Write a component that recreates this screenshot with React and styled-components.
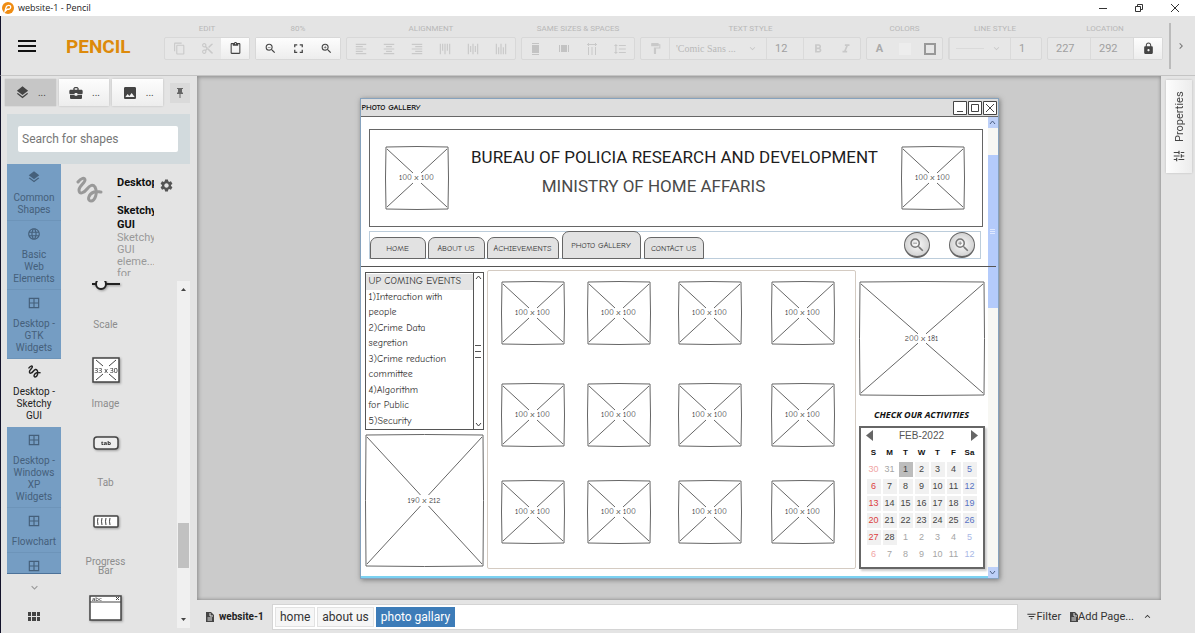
import React from "react";
import styled, { createGlobalStyle, css } from "styled-components";
import {
  MdBorderAll, MdBusinessCenter, MdChevronRight, MdContentCopy, MdContentCut, MdContentPaste,
  MdExpandLess, MdExpandMore, MdFilterList, MdFormatAlignCenter, MdFormatAlignLeft,
  MdFormatAlignRight, MdFormatBold, MdFormatItalic, MdFormatLineSpacing, MdFormatPaint,
  MdFullscreen, MdImage, MdLanguage, MdLayers, MdLock, MdSettings, MdTune,
  MdZoomIn, MdZoomOut,
} from "react-icons/md";

const HAND = `"Comic Neue", "Noto Sans", sans-serif`;

const GlobalStyle = createGlobalStyle`
  * { box-sizing: border-box; }
  body { margin: 0; font-family: Roboto, sans-serif; color: #333; background: #e4e4e4; }
  button, input, select { font-family: inherit; color: inherit; margin: 0; padding: 0; border: 0; background: none; border-radius: 0; }
  svg { display: block; flex: none; }
  h1, h2, h3, p, ul { margin: 0; padding: 0; list-style: none; }
`;

const AppShell = styled.div`
  display: grid;
  grid-template-columns: minmax(0, 1fr);
  grid-template-rows: 16px 60px 1fr;
  height: 100vh;
  overflow: hidden;
`;

/* Window title bar */
const TitleBar = styled.header`
  display: flex;
  align-items: center;
  gap: 4px;
  padding: 0 2px;
  background: #fff;
  font: 9px/14px "Open Sans", sans-serif;
  color: #222;
`;
const WindowButtons = styled.div`
  margin-left: auto;
  display: flex;
`;
const WindowButton = styled.button`
  width: 36px;
  height: 14px;
  display: grid;
  place-items: center;
`;

/* Toolbar */
const Toolbar = styled.div`
  display: flex;
  align-items: flex-start;
  padding: 7px 8px 0 16px;
  background: #e4e4e4;
  border-left: 1px solid #12122a;
  border-bottom: 1px solid #c4c4c4;
`;
const MenuButton = styled.button`
  width: 20px;
  height: 46px;
  display: grid;
  place-items: center;
  color: #111;
`;
const Brand = styled.h1`
  width: 98px;
  margin-left: 29px;
  font-size: 19px;
  line-height: 48px;
  font-weight: 700;
  color: #dd8a0b;
`;
const Tools = styled.div`
  display: flex;
  gap: 5px;
`;
const ToolSet = styled.section`
  display: flex;
  flex-direction: column;
`;
const ToolTitle = styled.h2`
  height: 14px;
  font-size: 8px;
  line-height: 12px;
  font-weight: 400;
  text-align: center;
  color: #b8b8b8;
`;
const Group = styled.div`
  display: flex;
  height: 23px;
  border: 1px solid #d8d8d8;
  border-radius: 2px;
  background: #e7e7e7;
  color: #c9c9c9;
`;
const raised = css`
  background: linear-gradient(#fdfdfd, #ededed);
  box-shadow: 0 0 2px #bbb;
  color: #444;
`;
const flatRaised = css`
  background: linear-gradient(#fdfdfd, #ededed);
  color: #444;
`;
const ToolButton = styled.button`
  width: ${(p) => p.$width || 28}px;
  display: grid;
  place-items: center;
  ${(p) => p.$active && flatRaised}
`;
const Turned = styled.span`
  display: grid;
  transform: rotate(${(p) => p.$angle}deg);
`;
const Field = styled.input`
  width: ${(p) => p.$width}px;
  padding: 0 8px;
  border-right: 1px solid #dadada;
  font-size: 11px;
  color: #a0a0a0;
  &:last-child { border-right: 0; }
`;
const SelectBox = styled.label`
  display: flex;
  align-items: center;
  justify-content: space-between;
  width: ${(p) => p.$width}px;
  padding: 0 8px 0 6px;
  border: solid #dadada;
  border-width: 0 1px;
  select {
    appearance: none;
    flex: 1;
    min-width: 0;
    font: 10px "Liberation Serif", serif;
    color: #b9b9b9;
    ${(p) => p.$line && "background: linear-gradient(#dadada, #dadada) left center / 28px 1px no-repeat;"}
  }
`;
const Swatch = styled.span`
  width: 12px;
  height: 12px;
  background: ${(p) => (p.$outline ? "transparent" : "#ededed")};
  border: ${(p) => (p.$outline ? "2px solid #999" : "0")};
`;
const LetterA = styled.b`
  font-size: 11px;
  font-weight: 700;
  color: #aaa;
`;
const Overflow = styled.button`
  margin-left: auto;
  height: 46px;
  padding-left: 4px;
  border-left: 2px solid #bbb;
  color: #777;
`;

/* Workspace */
const Workspace = styled.div`
  display: grid;
  grid-template-columns: 197px minmax(0, 1fr) 34px;
  min-height: 0;
`;
const Sidebar = styled.aside`
  display: flex;
  flex-direction: column;
  min-height: 0;
  padding: 3px 7px 0 4px;
  border-left: 1px solid #12122a;
  background: #e4e4e4;
`;
const PanelTabs = styled.div`
  display: flex;
  align-items: center;
  gap: 3px;
`;
const PanelTab = styled.button`
  width: 51px;
  height: 27px;
  display: flex;
  align-items: center;
  justify-content: center;
  gap: 8px;
  font-size: 10px;
  color: #444;
  ${(p) => (p.$current ? "background: #c6c6c6; box-shadow: 0 0 1px #aaa;" : raised)}
`;
const PinButton = styled.button`
  width: 20px;
  height: 20px;
  margin-left: 4px;
  display: grid;
  place-items: center;
  background: #dadada;
`;
const Library = styled.div`
  display: flex;
  flex-direction: column;
  flex: 1;
  min-height: 0;
  margin: 8px 0 0 2px;
`;
const SearchArea = styled.div`
  height: 50px;
  padding: 12px 12px 12px 11px;
  background: #d2dadd;
`;
const SearchInput = styled.input`
  width: 100%;
  height: 26px;
  padding: 0 4px;
  background: #fff;
  border-radius: 2px;
  font-size: 12px;
  &::placeholder { color: #777; opacity: 1; }
`;
const LibraryBody = styled.div`
  display: grid;
  grid-template-columns: 54px 1fr;
  flex: 1;
  min-height: 0;
`;
const CategoryColumn = styled.nav`
  display: flex;
  flex-direction: column;
  align-items: center;
  min-height: 0;
`;
const CategoryList = styled.ul`
  width: 100%;
  flex: 1;
  min-height: 0;
  overflow: hidden;
  border-bottom: 1px solid #4c7299;
`;
const Category = styled.button`
  width: 100%;
  display: flex;
  flex-direction: column;
  align-items: center;
  gap: 8px;
  padding: 6px 0 4px;
  border-bottom: 1px solid ${(p) => (p.$current ? "#e4e4e4" : "#6d94b9")};
  background: ${(p) => (p.$current ? "#e4e4e4" : "#759dc3")};
  color: ${(p) => (p.$current ? "#222" : "#45607b")};
  font-size: 10px;
  line-height: 12px;
  text-align: center;
  white-space: pre-line;
`;
const PlainIconButton = styled.button`
  height: ${(p) => p.$height}px;
  display: grid;
  place-items: center;
  color: ${(p) => p.$color};
`;
const ShapeColumn = styled.div`
  display: flex;
  flex-direction: column;
  min-height: 0;
`;
const CollectionHead = styled.div`
  height: 112px;
  margin-bottom: 5px;
  padding: 12px 0 0 15px;
  display: grid;
  grid-template-columns: 27px 45px 14px;
  column-gap: 6px;
  overflow: hidden;
`;
const CollectionText = styled.div`
  margin-left: 8px;
  overflow: hidden;
  white-space: pre;
`;
const CollectionTitle = styled.h3`
  font-size: 11px;
  line-height: 14px;
  font-weight: 700;
  color: #111;
`;
const CollectionNote = styled.p`
  font-size: 11px;
  line-height: 12px;
  color: #999;
`;
const GearButton = styled.button`
  margin-top: 2px;
  height: 15px;
  justify-self: end;
  color: #555;
`;
const ShapeScroller = styled.div`
  display: flex;
  flex: 1;
  min-height: 0;
  margin-bottom: 5px;
  overflow: hidden;
`;
const ShapeList = styled.ul`
  flex: 1;
  margin-top: -3px;
  padding-right: 27px;
`;
const Shape = styled.li`
  height: 79px;
  display: flex;
  flex-direction: column;
  align-items: center;
  svg { filter: drop-shadow(1px 1px 1px #999); }
`;
const ShapeIcon = styled.div`
  height: 42px;
`;
const ShapeName = styled.span`
  width: 48px;
  font-size: 10px;
  line-height: 9px;
  text-align: center;
  color: #8c8c8c;
`;
const ScrollTrack = styled.div`
  width: 13px;
  display: flex;
  flex-direction: column;
  align-items: center;
  justify-content: space-between;
  padding: 6px 0;
  background: #f0f0f0;
`;
const ScrollThumb = styled.div`
  width: 11px;
  height: 45px;
  margin: auto 0 49px;
  background: #c1c1c1;
`;

/* Canvas and page tabs */
const Center = styled.main`
  display: grid;
  grid-template-columns: minmax(0, 1fr);
  grid-template-rows: 1fr 33px;
  min-height: 0;
`;
const Canvas = styled.div`
  display: flex;
  justify-content: center;
  align-items: flex-start;
  padding-top: 22px;
  overflow: hidden;
  background: #cbcbcb;
  box-shadow: inset 1px 1px 4px #8c8c8c, inset -1px -1px 3px #aaa;
`;
const PageBar = styled.footer`
  display: flex;
  align-items: center;
  padding: 0 8px;
  font-size: 11px;
`;
const DocName = styled.div`
  width: 67px;
  display: flex;
  align-items: center;
  gap: 5px;
  font-size: 10px;
  font-weight: 700;
  color: #222;
`;
const PageTabs = styled.div`
  flex: 1;
  display: flex;
  gap: 2px;
  height: 26px;
  padding: 2px;
  border: 1px solid #d4d4d4;
  background: #fff;
`;
const PageTab = styled.button`
  padding: 0 4px;
  font-size: 12px;
  border: 1px solid ${(p) => (p.$current ? "#3d7cb8" : "#e2e2e2")};
  background: ${(p) => (p.$current ? "#3d7cb8" : "#f6f6f6")};
  color: ${(p) => (p.$current ? "#fff" : "#333")};
`;
const PageAction = styled.button`
  display: flex;
  align-items: center;
  margin-left: 8px;
  font-size: 11px;
  color: #333;
`;
const PropertiesRail = styled.aside`
  padding: 4px 3px 0 5px;
  background: #e4e4e4;
`;
const PropertiesTab = styled.button`
  width: 26px;
  height: 93px;
  display: flex;
  align-items: center;
  gap: 7px;
  padding: 10px 0 0;
  writing-mode: vertical-rl;
  transform: rotate(180deg);
  background: linear-gradient(90deg, #ececec, #fdfdfd);
  box-shadow: 0 0 2px #bbb;
  font-size: 11px;
  color: #444;
`;

/* Wireframe page */
const Artboard = styled.article`
  flex: none;
  width: 639px;
  height: 481px;
  display: flex;
  flex-direction: column;
  border: 1px solid #86a2bd;
  background: #fff;
  box-shadow: 1px 1px 5px #777;
  font-family: ${HAND};
  color: #333;
`;
const MockTitle = styled.div`
  display: flex;
  align-items: center;
  gap: 1px;
  height: 18px;
  padding: 0 1px;
  background: #dedede;
  border-bottom: 1px solid #666;
`;
const MockTitleText = styled.b`
  flex: 1;
  font-size: 8px;
  line-height: 16px;
  color: #111;
`;
const MockBody = styled.div`
  flex: 1;
  display: flex;
  min-height: 0;
`;
const MockPage = styled.div`
  flex: 1;
  min-width: 0;
  display: flex;
  flex-direction: column;
  border-bottom: 2px solid #7bd2f2;
`;
const BlueTrack = styled.div`
  width: 10px;
  display: grid;
  grid-template-rows: 11px 27px 153px 1fr 11px;
  justify-items: stretch;
  background: #f7f7f3;
`;
const BlueCap = styled.div`
  display: grid;
  place-items: center;
  background: #bdd0f8;
`;
const BlueThumb = styled.div`
  display: grid;
  place-items: center;
  background: #b4cbfb;
`;
const Banner = styled.section`
  height: 98px;
  margin: 12px 5px 0 8px;
  padding: 0 17px 0 15px;
  display: flex;
  align-items: center;
  justify-content: space-between;
  border: 1px solid #666;
  font-family: Roboto, sans-serif;
  text-align: center;
`;
const BannerText = styled.div`
  padding-bottom: 12px;
`;
const BannerTitle = styled.h2`
  font-size: 17px;
  line-height: 29px;
  font-weight: 400;
  white-space: nowrap;
  color: #1d1d1d;
`;
const BannerSubtitle = styled(BannerTitle)`
  padding-right: 42px;
  color: #4a4a4a;
`;
const SiteNav = styled.nav`
  display: flex;
  align-items: flex-end;
  gap: 2px;
  height: 28px;
  margin: 4px 7px 7px 8px;
  padding-right: 5px;
  border: 1px solid #bccddb;
`;
const SiteTab = styled.a`
  width: ${(p) => p.$width}px;
  height: ${(p) => (p.$current ? 28 : 22)}px;
  margin: ${(p) => (p.$current ? "0 1px -1px" : "0 0 -1px")};
  border: 1px solid #666;
  border-radius: 7px 7px 0 0;
  background: #e2e2e2;
  font-size: 8px;
  line-height: ${(p) => (p.$current ? 28 : 22)}px;
  text-align: center;
  white-space: nowrap;
  text-decoration: none;
  color: #333;
`;
const RoundButton = styled.button`
  width: 26px;
  height: 26px;
  margin-right: 17px;
  display: grid;
  place-items: center;
  border: 1px solid #666;
  border-bottom-width: 2px;
  border-radius: 50%;
  background: radial-gradient(#fafafa, #c4c4c4);
  color: #777;
  &:last-child { margin-right: 0; }
`;
const Spacer = styled.span`
  flex: 1;
`;
const Rule = styled.hr`
  position: relative;
  width: 635px;
  height: 1px;
  margin: 0;
  border: 0;
  background: #555;
`;
const Columns = styled.div`
  flex: 1;
  display: grid;
  grid-template-columns: 119px minmax(0, 1fr) 126px;
  gap: 3px;
  padding: 3px 3px 7px 4px;
`;
const LeftColumn = styled.div`
  display: grid;
  grid-template-rows: 158px 1fr;
  gap: 4px;
  padding-top: 2px;
`;
const EventBox = styled.div`
  display: grid;
  grid-template-columns: 1fr 10px;
  border: 1px solid #555;
`;
const EventList = styled.ul`
  display: grid;
  grid-auto-rows: 1fr;
  padding-top: 1px;
  font-size: 10px;
  line-height: 15px;
  white-space: nowrap;
  li { padding-left: 3px; }
  li:first-child { background: #e4e4e4; }
`;
const EventScroll = styled.div`
  display: flex;
  flex-direction: column;
  align-items: center;
  justify-content: space-between;
  padding: 2px 0;
  border-left: 1px solid #555;
`;
const Gallery = styled.section`
  display: grid;
  grid-template-columns: 86px 91px 93px 64px;
  grid-template-rows: 102px 97px 64px;
  padding: 10px 13px;
  border: 1px solid #d4cbc2;
  border-radius: 2px;
`;
const RightColumn = styled.div`
  display: flex;
  flex-direction: column;
  padding-top: 11px;
`;
const Activities = styled.h3`
  height: 30px;
  font: italic 700 9px/38px "Open Sans", sans-serif;
  text-align: center;
  white-space: nowrap;
  color: #111;
`;
const PlaceholderBox = styled.figure`
  margin: 0;
  width: ${(p) => p.$w}px;
  height: ${(p) => p.$h}px;
  display: grid;
  place-items: center;
  font: 8px/10px ${HAND};
  color: #333;
  > * { grid-area: 1 / 1; }
`;
const Calendar = styled.section`
  flex: 1;
  border: 2px solid #666;
  box-shadow: 2px 2px 2px #ccc;
  font-family: "Liberation Sans", sans-serif;
`;
const CalendarHead = styled.div`
  display: flex;
  align-items: center;
  justify-content: space-between;
  height: 15px;
  padding: 0 5px;
  font-size: 10px;
  color: #555;
`;
const MonthTable = styled.table`
  width: 114px;
  margin: 0 auto;
  table-layout: fixed;
  border-collapse: separate;
  border-spacing: 2px;
  font-size: 9px;
  line-height: 15px;
  th, td { padding: 0; height: 15px; text-align: center; }
  th { color: #111; font-size: 8px; font-weight: 700; }
`;
const dayColor = (p) => {
  if (p.$col === 0) return p.$out ? "#f0a5a5" : "#dc3d3d";
  if (p.$col === 6) return p.$out ? "#a9b8e6" : "#5873c4";
  return p.$out ? "#a5a5a5" : "#444";
};
const Day = styled.td`
  color: ${dayColor};
  background: ${(p) => (p.$today ? "#bdbdbd" : p.$out ? "transparent" : "#f1f1f1")};
`;

function Placeholder({ w, h, label }) {
  const cx = w / 2;
  const cy = h / 2;
  const k = h / w;
  const g = 4;
  return (
    <PlaceholderBox $w={w} $h={h}>
      <svg width={w} height={h} viewBox={`0 0 ${w} ${h}`} fill="none" stroke="#666">
        <path d={`M1 1Q${cx} 0 ${w - 1} 1Q${w} ${cy} ${w - 1} ${h - 1}Q${cx} ${h} 1 ${h - 1}Q0 ${cy} 1 1Z`} />
        <path
          d={`M2 3L${cx - g} ${cy - g * k - 1}M${w - 2} 3L${cx + g} ${cy - g * k - 1}M2 ${h - 3}L${cx - g} ${cy + g * k + 1}M${w - 2} ${h - 3}L${cx + g} ${cy + g * k + 1}`}
        />
      </svg>
      <figcaption>{label}</figcaption>
    </PlaceholderBox>
  );
}

function Squiggle({ size, color }) {
  return (
    <svg width={size} height={size} viewBox="0 0 27 27" fill="none" stroke={color} strokeWidth="3" strokeLinecap="round">
      <path d="M2 6C5 2 9 1 9 4C9 7 3 10 3 14C3 19 8 17 11 13C14 9 17 8 19 11C22 17 19 25 15 25C11 25 12 18 18 16C21 15 23 16 25 16" />
    </svg>
  );
}

function Logo() {
  return (
    <svg width="12" height="12" viewBox="0 0 12 12">
      <circle cx="6" cy="6" r="6" fill="#ef8c12" />
      <path d="M3 9.5L4 5.5C4.6 2.6 8.9 2.7 8.7 5.2C8.5 7.2 6.4 7.4 5.3 7.2L3 9.5Z" fill="none" stroke="#fff" strokeWidth="1.3" />
    </svg>
  );
}

function FileIcon() {
  return (
    <svg width="9" height="10" viewBox="0 0 9 10">
      <path d="M1 0H6L9 3V10H1Z" fill="#444" />
      <path d="M5 1V4H8M2.500 6H7M2.500 8H7" stroke="#e4e4e4" fill="none" />
    </svg>
  );
}

const Triangle = ({ d, w = 7, h = 5, color = "#444" }) => (
  <svg width={w} height={h} viewBox={`0 0 ${w} ${h}`}><path d={d} fill={color} /></svg>
);
const Caret = ({ down, color = "#444" }) => (
  <svg width="7" height="5" viewBox="0 0 7 5" fill="none" stroke={color}>
    <path d={down ? "M1 1L3.500 4L6 1" : "M1 4L3.500 1L6 4"} />
  </svg>
);
const BoxGlyph = ({ d }) => (
  <svg width="14" height="14" viewBox="0 0 14 14" fill="#fff" stroke="#444">
    <path d="M.5.5H13.500V13.500H.5Z" /><path d={d} />
  </svg>
);

const distribute = {
  height: <svg width="12" height="12" viewBox="0 0 12 12" fill="#c3c3c3"><path d="M2 2H9V10H2ZM2 0H9V1H2ZM2 11H9V12H2Z" /></svg>,
  width: <svg width="12" height="12" viewBox="0 0 12 12" fill="#c3c3c3"><path d="M3 2H9V9H3ZM1 2H2V9H1ZM10 2H11V9H10Z" /></svg>,
  gap: <svg width="12" height="12" viewBox="0 0 12 12" stroke="#c9c9c9" fill="none"><path d="M1 1.500H11M2.500 0V3M9.500 0V3M2.500 4V12M6 4V12M9.500 4V12" /></svg>,
};

const categories = [
  ["Common\nShapes", "layers"], ["Basic\nWeb\nElements", "web"], ["Desktop -\nGTK\nWidgets", "grid"],
  ["Desktop -\nSketchy\nGUI", "sketch"], ["Desktop -\nWindows\nXP\nWidgets", "grid"], ["Flowchart", "grid"], ["", "grid"],
];
const categoryIcon = {
  layers: <MdLayers size={14} />,
  web: <MdLanguage size={14} />,
  grid: <MdBorderAll size={14} />,
  sketch: <Squiggle size={13} color="#222" />,
};

const shapes = [
  ["Scale", <svg width="30" height="13" viewBox="0 0 30 13" fill="none" stroke="#222" strokeWidth="2"><path d="M1 6H6M14 6H29" /><circle cx="10" cy="6" r="5" fill="#eee" /></svg>],
  ["Image", <svg width="28" height="26" viewBox="0 0 28 26" fill="#fff" stroke="#444"><path d="M1 1H27V25H1Z" strokeWidth="1.500" /><path d="M4 3L11 9M24 3L17 9M4 23L11 17M24 23L17 17" /><text x="14" y="16" textAnchor="middle" fontSize="7" fill="#222" stroke="none" fontFamily="Noto Sans">33 x 30</text></svg>],
  ["Tab", <svg width="26" height="14" viewBox="0 0 26 14" fill="#eee" stroke="#444"><rect x="1" y="1" width="24" height="12" rx="3" strokeWidth="1.500" /><text x="13" y="9" textAnchor="middle" fontSize="6" fontWeight="700" fill="#222" stroke="none" fontFamily="Noto Sans">tab</text></svg>],
  ["Progress Bar", <svg width="26" height="13" viewBox="0 0 26 13" fill="#fff" stroke="#444"><rect x="1" y="1" width="24" height="11" rx="1" strokeWidth="1.500" /><path d="M5 3Q4 6 5 10M9 3Q8 6 9 10M13 3Q12 6 13 10M17 3Q16 6 17 10" /></svg>],
  ["", <svg width="33" height="27" viewBox="0 0 33 27" fill="#fff" stroke="#444"><path d="M1 2H32V26H1Z" strokeWidth="1.500" /><path d="M1 8H32M27 3L30 6M30 3L27 6" /><text x="3" y="7" fontSize="6" fill="#222" stroke="none" fontFamily="Noto Sans">abc</text></svg>],
];

const siteTabs = [["HOME", 56], ["ABOUT US", 57], ["ACHIEVEMENTS", 72], ["PHOTO GALLERY", 79], ["CONTACT US", 60]];
const events = [
  "UP COMING EVENTS", "1)Interaction with", "people", "2)Crime Data", "segretion",
  "3)Crime reduction", "committee", "4)Algorithm", "for Public", "5)Security",
];
const weekdays = ["S", "M", "T", "W", "T", "F", "Sa"];
const weeks = Array.from({ length: 6 }, (_, r) =>
  Array.from({ length: 7 }, (_, c) => {
    const n = r * 7 + c - 1;
    if (n < 1) return { n: n + 31, out: true };
    return n > 28 ? { n: n - 28, out: true } : { n, today: n === 1 };
  })
);

function TopToolbar() {
  return (
    <Toolbar>
      <MenuButton aria-label="Menu">
        <svg width="18" height="13" viewBox="0 0 18 13" fill="#111"><path d="M0 0H18V2H0ZM0 5H18V7H0ZM0 10H18V12H0Z" /></svg>
      </MenuButton>
      <Brand>PENCIL</Brand>
      <Tools>
        <ToolSet>
          <ToolTitle>EDIT</ToolTitle>
          <Group>
            <ToolButton aria-label="Copy"><MdContentCopy size={13} /></ToolButton>
            <ToolButton aria-label="Cut"><MdContentCut size={13} /></ToolButton>
            <ToolButton aria-label="Paste" $active><MdContentPaste size={13} /></ToolButton>
          </Group>
        </ToolSet>
        <ToolSet>
          <ToolTitle>80%</ToolTitle>
          <Group>
            <ToolButton aria-label="Zoom out" $active><MdZoomOut size={13} /></ToolButton>
            <ToolButton aria-label="Fit" $active><MdFullscreen size={15} /></ToolButton>
            <ToolButton aria-label="Zoom in" $active><MdZoomIn size={13} /></ToolButton>
          </Group>
        </ToolSet>
        <ToolSet>
          <ToolTitle>ALIGNMENT</ToolTitle>
          <Group>
            <ToolButton aria-label="Left"><MdFormatAlignLeft size={14} /></ToolButton>
            <ToolButton aria-label="Center"><MdFormatAlignCenter size={14} /></ToolButton>
            <ToolButton aria-label="Right"><MdFormatAlignRight size={14} /></ToolButton>
            <ToolButton aria-label="Top"><Turned $angle={90}><MdFormatAlignLeft size={14} /></Turned></ToolButton>
            <ToolButton aria-label="Middle"><Turned $angle={90}><MdFormatAlignCenter size={14} /></Turned></ToolButton>
            <ToolButton aria-label="Bottom"><Turned $angle={90}><MdFormatAlignRight size={14} /></Turned></ToolButton>
          </Group>
        </ToolSet>
        <ToolSet>
          <ToolTitle>SAME SIZES &amp; SPACES</ToolTitle>
          <Group>
            <ToolButton aria-label="Same height">{distribute.height}</ToolButton>
            <ToolButton aria-label="Same width">{distribute.width}</ToolButton>
            <ToolButton aria-label="Horizontal gap">{distribute.gap}</ToolButton>
            <ToolButton aria-label="Vertical gap"><MdFormatLineSpacing size={14} /></ToolButton>
          </Group>
        </ToolSet>
        <ToolSet>
          <ToolTitle>TEXT STYLE</ToolTitle>
          <Group>
            <ToolButton aria-label="Format painter"><MdFormatPaint size={13} /></ToolButton>
            <SelectBox $width={98}>
              <select aria-label="Font"><option>'Comic Sans ...</option></select>
              <MdExpandMore size={11} />
            </SelectBox>
            <Field $width={37} aria-label="Font size" defaultValue="12" />
            <ToolButton aria-label="Bold"><MdFormatBold size={14} /></ToolButton>
            <ToolButton aria-label="Italic"><MdFormatItalic size={14} /></ToolButton>
          </Group>
        </ToolSet>
        <ToolSet>
          <ToolTitle>COLORS</ToolTitle>
          <Group>
            <ToolButton $width={25} aria-label="Text color"><LetterA>A</LetterA></ToolButton>
            <ToolButton $width={25} aria-label="Fill color"><Swatch /></ToolButton>
            <ToolButton $width={25} aria-label="Line color"><Swatch $outline /></ToolButton>
          </Group>
        </ToolSet>
        <ToolSet>
          <ToolTitle>LINE STYLE</ToolTitle>
          <Group>
            <SelectBox $width={62} $line>
              <select aria-label="Line"><option aria-label="Solid"></option></select>
              <MdExpandMore size={11} />
            </SelectBox>
            <Field $width={30} aria-label="Line width" defaultValue="1" />
          </Group>
        </ToolSet>
        <ToolSet>
          <ToolTitle>LOCATION</ToolTitle>
          <Group>
            <Field $width={43} aria-label="X" defaultValue="227" />
            <Field $width={43} aria-label="Y" defaultValue="292" />
            <ToolButton $active aria-label="Lock"><MdLock size={13} /></ToolButton>
          </Group>
        </ToolSet>
      </Tools>
      <Overflow aria-label="More tools"><MdChevronRight size={12} /></Overflow>
    </Toolbar>
  );
}

function ShapePanel() {
  return (
    <Sidebar>
      <PanelTabs>
        <PanelTab $current><MdLayers size={15} />...</PanelTab>
        <PanelTab><MdBusinessCenter size={16} />...</PanelTab>
        <PanelTab><MdImage size={16} />...</PanelTab>
        <PinButton aria-label="Pin">
          <svg width="8" height="10" viewBox="0 0 8 10" fill="#666"><path d="M1 0H7V1H6V4L7 5V6H4.500V10H3.500V6H1V5L2 4V1H1Z" /></svg>
        </PinButton>
      </PanelTabs>
      <Library>
        <SearchArea><SearchInput aria-label="Search for shapes" placeholder="Search for shapes" /></SearchArea>
        <LibraryBody>
          <CategoryColumn>
            <CategoryList>
              {categories.map(([name, icon], i) => (
                <li key={name}>
                  <Category $current={i === 3} aria-label={name || "More"}>{categoryIcon[icon]}{name}</Category>
                </li>
              ))}
            </CategoryList>
            <PlainIconButton $height={26} $color="#999" aria-label="More categories"><MdExpandMore size={13} /></PlainIconButton>
            <PlainIconButton $height={33} $color="#444" aria-label="All categories">
              <svg width="12" height="9" viewBox="0 0 12 9" fill="#444">
                <path d="M0 0H3V4H0ZM4 0H8V4H4ZM9 0H12V4H9ZM0 5H3V9H0ZM4 5H8V9H4ZM9 5H12V9H9Z" />
              </svg>
            </PlainIconButton>
          </CategoryColumn>
          <ShapeColumn>
            <CollectionHead>
              <Squiggle size={27} color="#999" />
              <CollectionText>
                <CollectionTitle>{"Desktop\n-\nSketchy\nGUI"}</CollectionTitle>
                <CollectionNote>{"Sketchy\nGUI\neleme...\nfor"}</CollectionNote>
              </CollectionText>
              <GearButton aria-label="Collection settings"><MdSettings size={15} /></GearButton>
            </CollectionHead>
            <ShapeScroller>
              <ShapeList>
                {shapes.map(([name, icon]) => (
                  <Shape key={name}><ShapeIcon>{icon}</ShapeIcon><ShapeName>{name}</ShapeName></Shape>
                ))}
              </ShapeList>
              <ScrollTrack>
                <Triangle d="M1 4L3.500 1L6 4Z" />
                <ScrollThumb />
                <Triangle d="M1 1L3.500 4L6 1Z" />
              </ScrollTrack>
            </ShapeScroller>
          </ShapeColumn>
        </LibraryBody>
      </Library>
    </Sidebar>
  );
}

function Wireframe() {
  return (
    <Artboard>
      <MockTitle>
        <MockTitleText>PHOTO GALLERY</MockTitleText>
        <BoxGlyph d="M4 10.500H10" />
        <BoxGlyph d="M3.500 3.500H10.500V10.500H3.500Z" />
        <BoxGlyph d="M3 3L11 11M11 3L3 11" />
      </MockTitle>
      <MockBody>
        <MockPage>
          <Banner>
            <Placeholder w={64} h={64} label="100 x 100" />
            <BannerText>
              <BannerTitle>BUREAU OF POLICIA RESEARCH AND DEVELOPMENT</BannerTitle>
              <BannerSubtitle>MINISTRY OF HOME AFFARIS</BannerSubtitle>
            </BannerText>
            <Placeholder w={64} h={64} label="100 x 100" />
          </Banner>
          <SiteNav>
            {siteTabs.map(([name, width], i) => (
              <SiteTab key={name} href="#" $width={width} $current={i === 3}>{name}</SiteTab>
            ))}
            <Spacer />
            <RoundButton aria-label="Zoom out"><MdZoomOut size={18} /></RoundButton>
            <RoundButton aria-label="Zoom in"><MdZoomIn size={18} /></RoundButton>
          </SiteNav>
          <Rule />
          <Columns>
            <LeftColumn>
              <EventBox>
                <EventList>{events.map((e) => <li key={e}>{e}</li>)}</EventList>
                <EventScroll>
                  <Caret />
                  <svg width="7" height="13" viewBox="0 0 7 13" stroke="#555"><path d="M0 .5H6M0 6.500H6M0 12.500H6" /></svg>
                  <Caret down />
                </EventScroll>
              </EventBox>
              <Placeholder w={119} h={133} label="190 x 212" />
            </LeftColumn>
            <Gallery>
              {Array.from({ length: 12 }, (_, i) => <Placeholder key={i} w={64} h={64} label="100 x 100" />)}
            </Gallery>
            <RightColumn>
              <Placeholder w={126} h={115} label="200 x 181" />
              <Activities>CHECK OUR ACTIVITIES</Activities>
              <Calendar>
                <CalendarHead>
                  <Triangle w={7} h={11} d="M7 0V11L0 5.500Z" color="#666" />
                  FEB-2022
                  <Triangle w={7} h={11} d="M0 0V11L7 5.500Z" color="#666" />
                </CalendarHead>
                <MonthTable>
                  <thead><tr>{weekdays.map((d, i) => <th key={i}>{d}</th>)}</tr></thead>
                  <tbody>
                    {weeks.map((week, r) => (
                      <tr key={r}>
                        {week.map((d, c) => <Day key={c} $col={c} $out={d.out} $today={d.today}>{d.n}</Day>)}
                      </tr>
                    ))}
                  </tbody>
                </MonthTable>
              </Calendar>
            </RightColumn>
          </Columns>
        </MockPage>
        <BlueTrack>
          <BlueCap><Caret color="#4d6185" /></BlueCap>
          <span />
          <BlueThumb><svg width="5" height="5" viewBox="0 0 5 5" stroke="#dfe9ff"><path d="M0 .5H5M0 2.500H5M0 4.500H5" /></svg></BlueThumb>
          <span />
          <BlueCap><Caret down color="#4d6185" /></BlueCap>
        </BlueTrack>
      </MockBody>
    </Artboard>
  );
}

export default function App() {
  return (
    <AppShell>
      <GlobalStyle />
      <TitleBar>
        <Logo />
        website-1 - Pencil
        <WindowButtons>
          <WindowButton aria-label="Minimize"><svg width="8" height="8" stroke="#333"><path d="M0 4.500H8" /></svg></WindowButton>
          <WindowButton aria-label="Restore"><svg width="8" height="8" stroke="#333" fill="none"><path d="M.5 2.500H5.500V7.500H.5ZM2.500 2V.5H7.500V5.500H6" /></svg></WindowButton>
          <WindowButton aria-label="Close"><svg width="8" height="8" stroke="#333"><path d="M0 0L8 8M8 0L0 8" /></svg></WindowButton>
        </WindowButtons>
      </TitleBar>
      <TopToolbar />
      <Workspace>
        <ShapePanel />
        <Center>
          <Canvas><Wireframe /></Canvas>
          <PageBar>
            <DocName><FileIcon />website-1</DocName>
            <PageTabs>
              <PageTab>home</PageTab>
              <PageTab>about us</PageTab>
              <PageTab $current>photo gallary</PageTab>
            </PageTabs>
            <PageAction><MdFilterList size={11} />Filter</PageAction>
            <PageAction><FileIcon />Add Page...</PageAction>
            <PageAction aria-label="Expand"><MdExpandLess size={11} /></PageAction>
          </PageBar>
        </Center>
        <PropertiesRail>
          <PropertiesTab><MdTune size={14} />Properties</PropertiesTab>
        </PropertiesRail>
      </Workspace>
    </AppShell>
  );
}
